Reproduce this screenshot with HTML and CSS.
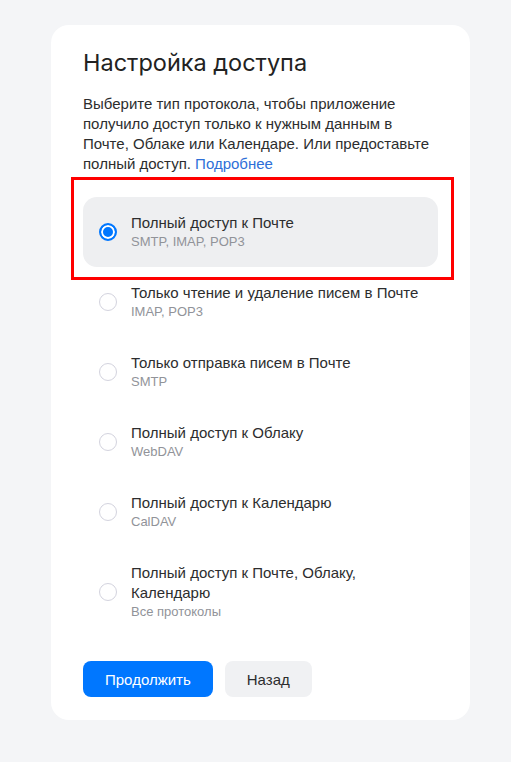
FILE: index.html
```html
<!DOCTYPE html>
<html lang="ru">
<head>
    <meta charset="UTF-8" />
    <title>Настройка доступа</title>
    <link rel="stylesheet" href="styles.css">
</head>
<body>
    <div class="access-card">
        <h2>Настройка доступа</h2>
        <p class="intro">Выберите тип протокола, чтобы приложение получило доступ только к нужным данным в Почте, Облаке или Календаре. Или предоставьте полный доступ. <a href="#">Подробнее</a></p>

        <form class="options">
            <label class="option selected">
                <input type="radio" name="proto" checked />
                <span class="radio"></span>
                <span class="text">
                    <span class="name">Полный доступ к Почте</span>
                    <span class="sub">SMTP, IMAP, POP3</span>
                </span>
            </label>
            <label class="option">
                <input type="radio" name="proto" />
                <span class="radio"></span>
                <span class="text">
                    <span class="name">Только чтение и удаление писем в Почте</span>
                    <span class="sub">IMAP, POP3</span>
                </span>
            </label>
            <label class="option">
                <input type="radio" name="proto" />
                <span class="radio"></span>
                <span class="text">
                    <span class="name">Только отправка писем в Почте</span>
                    <span class="sub">SMTP</span>
                </span>
            </label>
            <label class="option">
                <input type="radio" name="proto" />
                <span class="radio"></span>
                <span class="text">
                    <span class="name">Полный доступ к Облаку</span>
                    <span class="sub">WebDAV</span>
                </span>
            </label>
            <label class="option">
                <input type="radio" name="proto" />
                <span class="radio"></span>
                <span class="text">
                    <span class="name">Полный доступ к Календарю</span>
                    <span class="sub">CalDAV</span>
                </span>
            </label>
            <label class="option">
                <input type="radio" name="proto" />
                <span class="radio"></span>
                <span class="text">
                    <span class="name">Полный доступ к Почте, Облаку, Календарю</span>
                    <span class="sub">Все протоколы</span>
                </span>
            </label>
        </form>

        <div class="actions">
            <button class="btn primary">Продолжить</button>
            <button class="btn secondary">Назад</button>
        </div>
    </div>
</body>
</html>
```

FILE: styles.css
```css
* {
    margin: 0;
    padding: 0;
    box-sizing: border-box;
    font-family: 'Liberation Sans', Arial, sans-serif;
}

body {
    background: #f4f5f7;
    padding-top: 25px;
    padding-left: 51px;
}

.access-card {
    width: 419px;
    background: #fff;
    border-radius: 18px;
    padding: 22px 32px 23px;
}

.access-card h2 {
    font-family: 'Inter', 'Liberation Sans', sans-serif;
    font-weight: 400;
    font-size: 23.5px;
    line-height: 32px;
    color: #222;
    margin-bottom: 15px;
}

.intro {
    font-size: 15px;
    line-height: 20px;
    color: #2c2d2e;
    margin-bottom: 23px;
}

.intro a {
    color: #2e6fd8;
    text-decoration: none;
}

.options {
    display: flex;
    flex-direction: column;
}

.option {
    position: relative;
    display: flex;
    align-items: center;
    gap: 14px;
    padding: 16px 16px;
    border-radius: 14px;
    cursor: pointer;
}

.option input {
    display: none;
}

.option.selected {
    background: #eeeff1;
}

/* kırmızı işaret çerçevesi */
.option.selected::after {
    content: "";
    position: absolute;
    top: -20px;
    left: -12px;
    right: -16px;
    bottom: -13px;
    border: 3px solid #ff0000;
}

.radio {
    flex: none;
    width: 18px;
    height: 18px;
    border-radius: 50%;
    border: 1.5px solid #d3d3de;
    background: #fff;
}

.option.selected .radio {
    border: 2px solid #0077ff;
    background: #0077ff;
    box-shadow: inset 0 0 0 2px #fff;
}

.text {
    display: flex;
    flex-direction: column;
}

.name {
    font-size: 15px;
    line-height: 20px;
    color: #2c2d2e;
}

.sub {
    font-size: 13px;
    line-height: 18px;
    color: #919399;
}

.options .option:last-child .name {
    width: 250px;
}

.actions {
    display: flex;
    gap: 12px;
    margin-top: 24px;
}

.btn {
    height: 36px;
    padding: 0 22px;
    border: none;
    border-radius: 8px;
    font-size: 15px;
    cursor: pointer;
}

.btn.primary {
    background: #0077ff;
    color: #fff;
}

.btn.secondary {
    background: #f0f1f3;
    color: #2c2d2e;
}
```
